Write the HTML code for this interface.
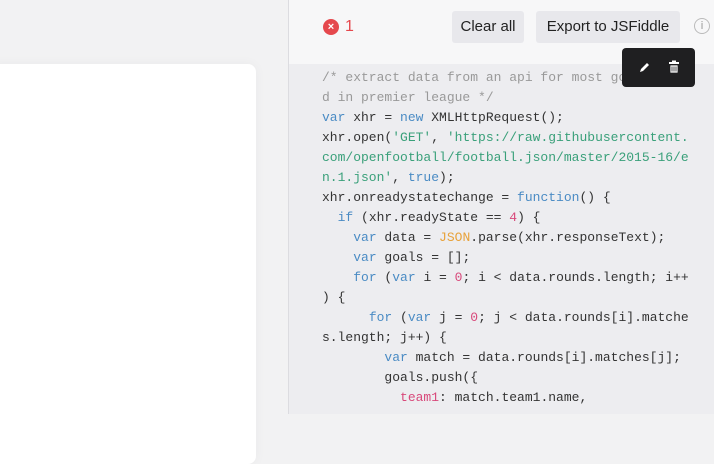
<!DOCTYPE html>
<html><head><style>
html,body{margin:0;width:714px;height:414px;overflow:hidden;background:#f2f2f3;font-family:"Liberation Sans",sans-serif}
.card{position:absolute;left:-10px;top:64px;width:266px;height:400px;background:#fff;border-radius:8px;box-shadow:0 0 12px rgba(0,0,0,0.04)}
.panel{position:absolute;left:288px;top:0;width:426px;height:414px;border-left:1px solid #dcdce0;background:#ededf0;box-sizing:border-box}
.head{position:absolute;left:0;top:0;width:426px;height:64px;background:#f7f7f8}
.err{position:absolute;left:34px;top:19px;width:16px;height:16px;border-radius:50%;background:#e5484d;color:#fff;font-size:11px;font-weight:bold;text-align:center;line-height:16px}
.errn{position:absolute;left:56px;top:18px;color:#e5484d;font-size:16px}
.btn{position:absolute;top:11px;height:32px;background:#e8e8ec;border-radius:3px;font-size:15px;color:#222;line-height:32px;text-align:center}
.info{position:absolute;left:405px;top:18px;width:14px;height:14px;border:1.5px solid #bbb;border-radius:50%;color:#bbb;font-size:11px;text-align:center;line-height:14px;font-weight:bold}
pre{position:absolute;left:33px;top:68px;margin:0;font-family:"Liberation Mono",monospace;font-size:13px;line-height:20px;color:#333}
.c{color:#999}.k{color:#4a8bc4}.s{color:#3aa07a}.n{color:#d8487a}.o{color:#e8a23a}
.tb{position:absolute;left:333px;top:48px;width:73px;height:39px;background:#1f1f21;border-radius:4px}
</style></head><body>
<div class="card"></div>
<div class="panel">
<div class="head">
<div class="err">×</div><div class="errn">1</div>
<div class="btn" style="left:163px;width:72px">Clear all</div>
<div class="btn" style="left:247px;width:144px">Export to JSFiddle</div>
<div class="info">i</div>
</div>
<pre><span class="c">/* extract data from an api for most go
d in premier league */</span>
<span class="k">var</span> xhr = <span class="k">new</span> XMLHttpRequest();
xhr.open(<span class="s">'GET'</span>, <span class="s">'https://raw.githubusercontent.
com/openfootball/football.json/master/2015-16/e
n.1.json'</span>, <span class="k">true</span>);
xhr.onreadystatechange = <span class="k">function</span>() {
  <span class="k">if</span> (xhr.readyState == <span class="n">4</span>) {
    <span class="k">var</span> data = <span class="o">JSON</span>.parse(xhr.responseText);
    <span class="k">var</span> goals = [];
    <span class="k">for</span> (<span class="k">var</span> i = <span class="n">0</span>; i &lt; data.rounds.length; i++
) {
      <span class="k">for</span> (<span class="k">var</span> j = <span class="n">0</span>; j &lt; data.rounds[i].matche
s.length; j++) {
        <span class="k">var</span> match = data.rounds[i].matches[j];
        goals.push({
          <span class="n">team1</span>: match.team1.name,
</pre>
<div class="tb">
<svg style="position:absolute;left:16px;top:12px" width="14" height="14" viewBox="0 0 14 14"><path d="M2 12 L3 9 L9 3 L11 5 L5 11 Z" fill="#fff"/></svg>
<svg style="position:absolute;left:46px;top:12px" width="12" height="14" viewBox="0 0 12 14"><rect x="1" y="2" width="10" height="2" fill="#fff"/><rect x="4" y="0.5" width="4" height="2" fill="#fff"/><path d="M2 5 H10 V13 H2 Z M4 6.5 V11.5 M6 6.5 V11.5 M8 6.5 V11.5" fill="#fff" stroke="#1f1f21" stroke-width="0.8"/></svg>
</div>
</div>
</body></html>
